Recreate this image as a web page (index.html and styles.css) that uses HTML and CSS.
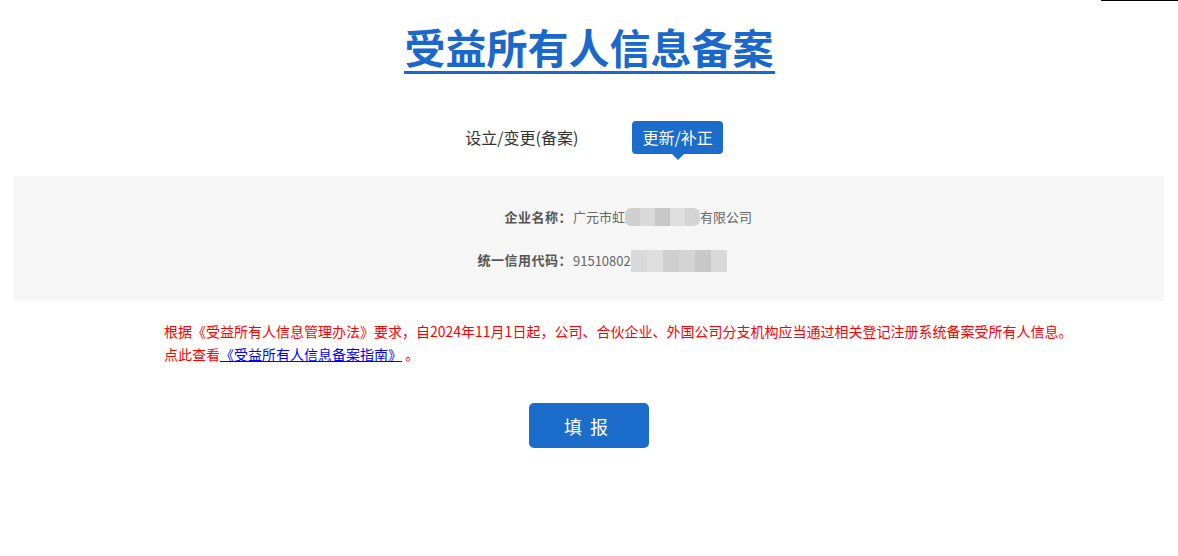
FILE: index.html
```html
<!DOCTYPE html>
<html lang="zh-CN">
<head>
    <meta charset="UTF-8">
    <meta name="viewport" content="width=device-width, initial-scale=1.0">
    <link rel="stylesheet" href="styles.css">
    <title>受益所有人信息备案</title>
</head>
<body>
    <div class="top-line"></div>
    <div class="header">
        <h1 class="page-title">受益所有人信息备案</h1>
    </div>
    <div class="tabs">
        <span class="tab">设立/变更(备案)</span>
        <span class="tab active">更新/补正</span>
    </div>
    <div class="info-panel">
        <div class="info-row">
            <span class="info-label">企业名称：</span>
            <span class="info-value">广元市虹<span class="mask mask-name"><i class="m1"></i><i class="m2"></i><i class="m3"></i><i class="m4"></i><i class="m5"></i></span>有限公司</span>
        </div>
        <div class="info-row">
            <span class="info-label">统一信用代码：</span>
            <span class="info-value">91510802<span class="mask mask-code"><i class="m2"></i><i class="m4"></i><i class="m1"></i><i class="m5"></i><i class="m3"></i><i class="m2"></i></span></span>
        </div>
    </div>
    <div class="notice">
        <p>根据《受益所有人信息管理办法》要求，自2024年11月1日起，公司、合伙企业、外国公司分支机构应当通过相关登记注册系统备案受所有人信息。</p>
        <p>点此查看<a href="#" class="guide-link">《受益所有人信息备案指南》</a> 。</p>
    </div>
    <div class="actions">
        <button class="submit-btn">填 报</button>
    </div>
</body>
</html>
```

FILE: styles.css
```css
body {
    margin: 0;
    padding: 0;
    font-family: "Noto Sans CJK SC", "Liberation Sans", sans-serif;
    background: #fff;
}

.top-line {
    width: 77px;
    height: 1px;
    margin-left: auto;
    background: #000;
}

.header {
    text-align: center;
}

.page-title {
    display: inline-block;
    margin: 20px 0 0;
    font-size: 41px;
    line-height: 50px;
    font-weight: bold;
    color: #1a68c9;
    border-bottom: 3px solid #1a68c9;
    padding: 0 1px;
}

.tabs {
    display: flex;
    justify-content: center;
    gap: 44px;
    margin-top: 47px;
}

.tab {
    position: relative;
    padding: 0 10px;
    line-height: 33px;
    font-size: 16px;
    color: #333;
    border-radius: 4px;
}

.tab.active {
    background: #1b6ccb;
    color: #fff;
}

.tab.active::after {
    content: "";
    position: absolute;
    left: 50%;
    bottom: -6px;
    margin-left: -6px;
    border-left: 6px solid transparent;
    border-right: 6px solid transparent;
    border-top: 6px solid #1b6ccb;
}

.info-panel {
    margin: 22px 14px 0;
    padding: 31px 0 29px;
    background: #f6f6f6;
}

.info-row {
    display: flex;
    line-height: 20px;
    font-size: 13px;
}

.info-row + .info-row {
    margin-top: 23px;
}

.info-label {
    width: 558px;
    text-align: right;
    font-weight: bold;
    color: #555;
    letter-spacing: 0.5px;
}

.info-value {
    display: flex;
    align-items: center;
    padding-left: 1px;
    color: #666;
}

.mask {
    display: inline-flex;
    height: 18px;
}

.mask-code {
    height: 22px;
}

.mask i {
    display: block;
    height: 100%;
}

.mask-name i {
    width: 15px;
}

.mask-name i:first-child {
    border-radius: 6px 0 0 6px;
}

.mask-name i:last-child {
    border-radius: 0 6px 6px 0;
}

.mask-code i {
    width: 16px;
}

.m1 { background: #cfcfcf; }
.m2 { background: #d9d9d9; }
.m3 { background: #c8c8c8; }
.m4 { background: #dedede; }
.m5 { background: #d4d4d4; }

.notice {
    margin-top: 19px;
    padding-left: 164px;
    font-size: 14px;
    line-height: 23px;
    color: #f00;
}

.notice p {
    margin: 0;
}

.guide-link {
    color: #00f;
    text-decoration: underline;
}

.actions {
    text-align: center;
    margin-top: 37px;
}

.submit-btn {
    width: 120px;
    height: 45px;
    border: none;
    border-radius: 5px;
    background: #1b6ccb;
    color: #fff;
    font-family: inherit;
    font-size: 18px;
    letter-spacing: 2px;
    padding-left: 2px;
    cursor: pointer;
}
```
